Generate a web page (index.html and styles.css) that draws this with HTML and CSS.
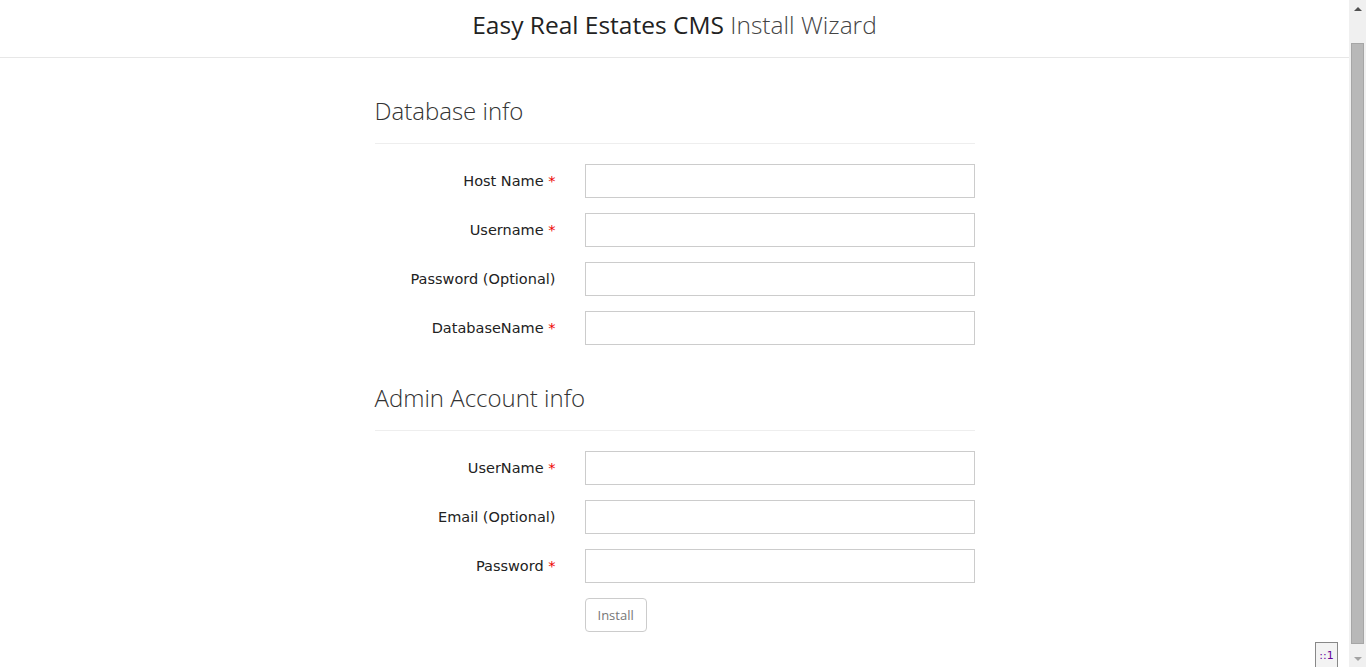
FILE: index.html
```html
<!DOCTYPE html>
<html>
<head>
<meta charset="utf-8">
<title>Install Wizard</title>
<link rel="stylesheet" href="styles.css">
</head>
<body>
<header class="topbar">
  <h1 class="brand">Easy Real Estates CMS <span class="brand-light">Install Wizard</span></h1>
</header>
<main class="wrap">
  <form class="form">
    <h2 class="section-title">Database info</h2>
    <div class="row"><label class="lbl">Host Name <span class="req">*</span></label><div class="field"><input class="input" type="text"></div></div>
    <div class="row"><label class="lbl">Username <span class="req">*</span></label><div class="field"><input class="input" type="text"></div></div>
    <div class="row"><label class="lbl">Password (Optional)</label><div class="field"><input class="input" type="password"></div></div>
    <div class="row"><label class="lbl">DatabaseName <span class="req">*</span></label><div class="field"><input class="input" type="text"></div></div>

    <h2 class="section-title second">Admin Account info</h2>
    <div class="row"><label class="lbl">UserName <span class="req">*</span></label><div class="field"><input class="input" type="text"></div></div>
    <div class="row"><label class="lbl">Email (Optional)</label><div class="field"><input class="input" type="text"></div></div>
    <div class="row"><label class="lbl">Password <span class="req">*</span></label><div class="field"><input class="input" type="password"></div></div>
    <div class="row"><div class="lbl"></div><div class="field"><button class="btn" type="button">Install</button></div></div>
  </form>
</main>
<div class="debug">::1</div>
<div class="scrollbar" aria-hidden="true">
  <span class="sb-arrow sb-up"></span>
  <div class="sb-track"><div class="sb-thumb"></div></div>
  <span class="sb-arrow sb-down"></span>
</div>
</body>
</html>
```
FILE: styles.css
```css
html, body {
  margin: 0;
  padding: 0;
}
body {
  font-family: "Open Sans", "Liberation Sans", sans-serif;
  color: #333;
  background: #fff;
  margin-right: 17px;
}
.topbar {
  height: 57px;
  border-bottom: 1px solid #e7e7e7;
  display: flex;
  align-items: center;
  justify-content: center;
}
.brand {
  margin: 0;
  font-size: 24.5px;
  font-weight: 400;
  color: #222;
  line-height: 1;
  padding-bottom: 6px;
}
.brand-light {
  font-weight: 300;
  color: #444;
}
.wrap {
  width: 600px;
  margin: 0 auto;
}
.form {
  display: flex;
  flex-direction: column;
}
.section-title {
  margin: 36px 0 20px;
  padding-bottom: 15px;
  border-bottom: 1px solid #eee;
  font-size: 24px;
  font-weight: 300;
  line-height: 34px;
  color: #333;
}
.section-title.second {
  margin-top: 21px;
}
.row {
  display: flex;
  align-items: center;
  height: 34px;
  margin-bottom: 15px;
}
.lbl {
  flex: none;
  width: 210px;
  padding-right: 29px;
  box-sizing: border-box;
  text-align: right;
  font-family: "DejaVu Sans", "Open Sans", sans-serif;
  font-size: 14.5px;
  font-weight: 400;
  color: #222;
}
.req {
  color: #e00;
}
.field {
  flex: 1;
}
.input {
  display: block;
  width: 390px;
  height: 34px;
  box-sizing: border-box;
  border: 1px solid #ccc;
  border-radius: 0;
  padding: 6px 12px;
  font-family: inherit;
  font-size: 14px;
  background: #fff;
}
.btn {
  height: 34px;
  padding: 0 12px;
  border: 1px solid #ccc;
  border-radius: 4px;
  background: #fff;
  color: #777;
  font-family: inherit;
  font-size: 13px;
}
.debug {
  position: fixed;
  right: 28px;
  bottom: 0;
  width: 21px;
  height: 24px;
  border: 1px solid #888;
  border-bottom: none;
  background: #f3f3f3;
  font-size: 11px;
  color: #609;
  display: flex;
  align-items: center;
  justify-content: center;
  font-family: "DejaVu Sans", sans-serif;
}
.scrollbar {
  position: fixed;
  top: 0;
  right: 0;
  bottom: 0;
  width: 17px;
  background: #f0f0f0;
  display: flex;
  flex-direction: column;
  align-items: center;
}
.sb-arrow {
  flex: none;
  width: 0;
  height: 0;
  border-left: 4px solid transparent;
  border-right: 4px solid transparent;
}
.sb-up {
  margin: 7px 0 0;
  border-bottom: 4px solid #505050;
}
.sb-down {
  margin: 0 0 6px;
  border-top: 4px solid #a3a3a3;
}
.sb-track {
  flex: 1;
  width: 100%;
  padding: 32px 2px 13px;
  box-sizing: border-box;
  display: flex;
}
.sb-thumb {
  flex: 1;
  background: #b8b8b8;
  border: 1px solid #a6a6a6;
}
```
